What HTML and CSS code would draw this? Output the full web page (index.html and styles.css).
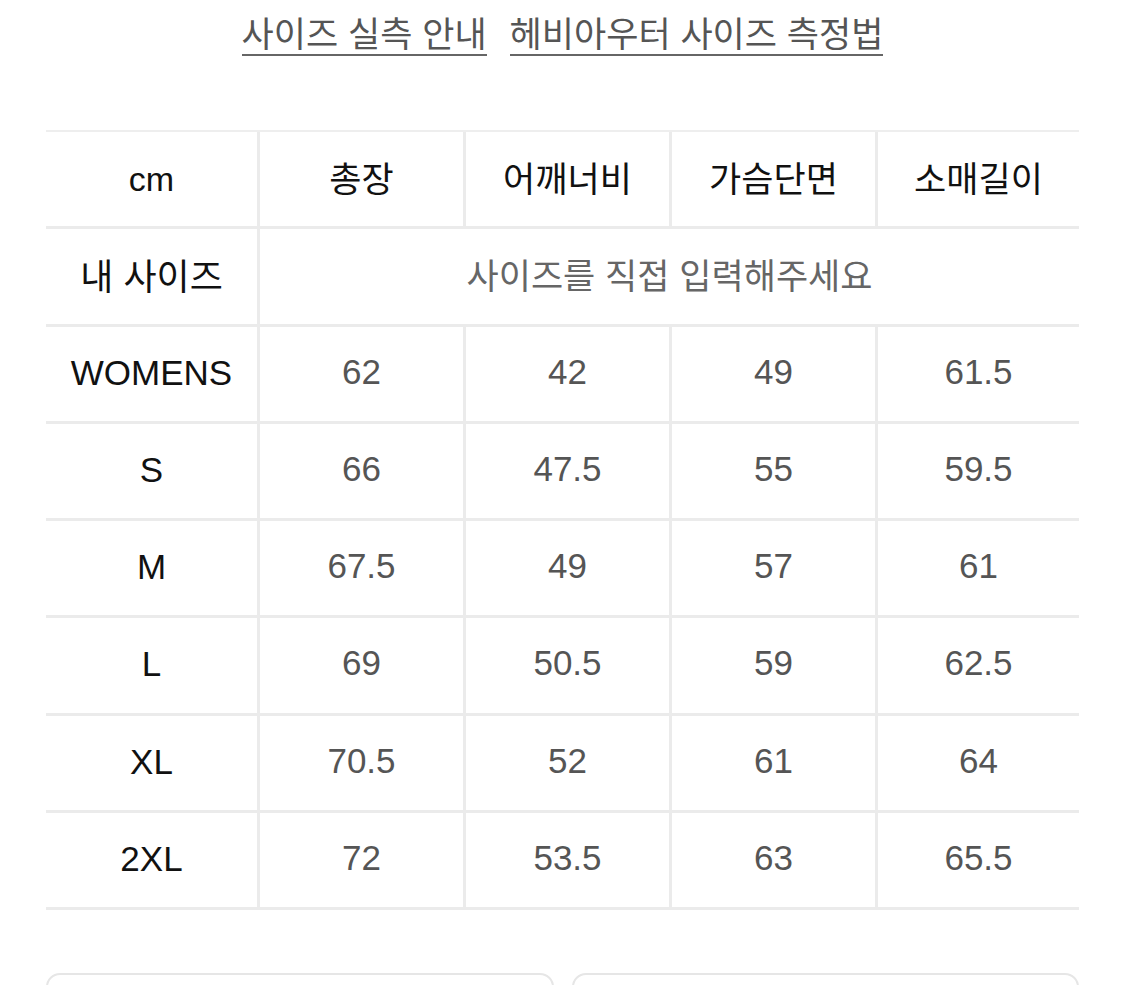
FILE: index.html
```html
<!DOCTYPE html>
<html lang="ko">
<head>
<meta charset="utf-8">
<link rel="stylesheet" href="styles.css">
</head>
<body>
<div class="page">
  <nav class="links">
    <a class="link" href="#">사이즈 실측 안내</a>
    <a class="link" href="#">헤비아우터 사이즈 측정법</a>
  </nav>

  <div class="size-table">
    <div class="cell label unit">cm</div>
    <div class="cell head">총장</div>
    <div class="cell head">어깨너비</div>
    <div class="cell head">가슴단면</div>
    <div class="cell head">소매길이</div>

    <div class="cell label head">내 사이즈</div>
    <div class="cell input span4">사이즈를 직접 입력해주세요</div>

    <div class="cell label">WOMENS</div>
    <div class="cell val">62</div><div class="cell val">42</div><div class="cell val">49</div><div class="cell val">61.5</div>

    <div class="cell label">S</div>
    <div class="cell val">66</div><div class="cell val">47.5</div><div class="cell val">55</div><div class="cell val">59.5</div>

    <div class="cell label">M</div>
    <div class="cell val">67.5</div><div class="cell val">49</div><div class="cell val">57</div><div class="cell val">61</div>

    <div class="cell label">L</div>
    <div class="cell val">69</div><div class="cell val">50.5</div><div class="cell val">59</div><div class="cell val">62.5</div>

    <div class="cell label">XL</div>
    <div class="cell val">70.5</div><div class="cell val">52</div><div class="cell val">61</div><div class="cell val">64</div>

    <div class="cell label">2XL</div>
    <div class="cell val">72</div><div class="cell val">53.5</div><div class="cell val">63</div><div class="cell val">65.5</div>
  </div>

  <div class="boxes">
    <div class="box"></div>
    <div class="box"></div>
  </div>
</div>
</body>
</html>
```

FILE: styles.css
```css
html, body {
  margin: 0;
  padding: 0;
  background: #ffffff;
}

body {
  font-family: "Liberation Sans", "Noto Sans CJK KR", sans-serif;
  color: #111;
}

.page {
  padding: 11px 46px 0 46px;
}

.links {
  display: flex;
  justify-content: center;
  gap: 23px;
}

.link {
  font-family: "Noto Sans CJK KR", sans-serif;
  font-size: 35px;
  line-height: 41px;
  color: #555;
  text-decoration: none;
  padding-bottom: 2px;
  border-bottom: 2.5px solid #666;
}

.size-table {
  margin-top: 74px;
  display: grid;
  grid-template-columns: 211px 206px 206px 206px 1fr;
  grid-auto-rows: 97.25px;
  border-top: 2px solid #eeeeee;
}

.cell {
  display: flex;
  align-items: center;
  justify-content: center;
  border-bottom: 3px solid #ebebeb;
  border-left: 3px solid #ebebeb;
  font-size: 35px;
  padding-bottom: 2px;
  box-sizing: border-box;
}

.cell.label {
  border-left: none;
  color: #111;
}

.cell.head {
  font-family: "Noto Sans CJK KR", sans-serif;
  font-size: 35px;
  font-weight: 400;
  color: #111;
  padding-bottom: 6px;
}

.cell.label.head {
  font-size: 36px;
  padding-bottom: 4px;
}

.cell.unit {
  font-size: 34px;
  padding-top: 2px;
}

.cell.span4 {
  grid-column: span 4;
}

.cell.input {
  font-family: "Noto Sans CJK KR", sans-serif;
  font-size: 35px;
  color: #666;
  padding-bottom: 6px;
}

.cell.val {
  color: #555;
  padding-bottom: 4px;
}

.boxes {
  margin-top: 63px;
  display: flex;
  gap: 18px;
}

.box {
  flex: 1;
  height: 60px;
  border: 2px solid #e6e6e6;
  border-radius: 14px;
}
```
